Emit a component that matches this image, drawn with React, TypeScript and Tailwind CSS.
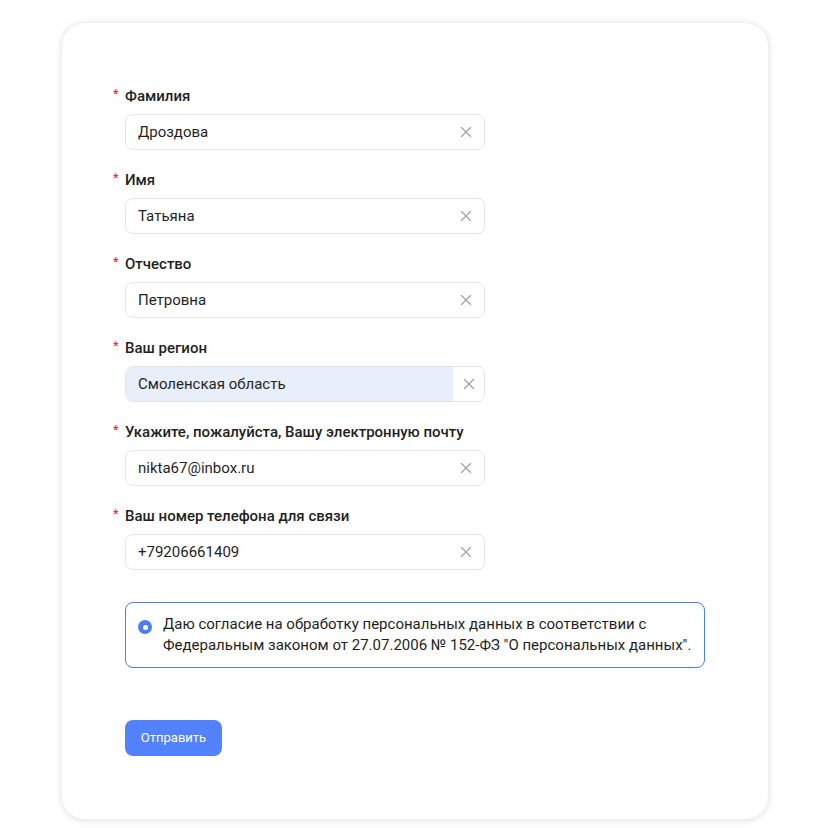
import React from "react";

const fields = [
  { label: "Фамилия", value: "Дроздова" },
  { label: "Имя", value: "Татьяна" },
  { label: "Отчество", value: "Петровна" },
  { label: "Ваш регион", value: "Смоленская область", select: true },
  { label: "Укажите, пожалуйста, Вашу электронную почту", value: "nikta67@inbox.ru" },
  { label: "Ваш номер телефона для связи", value: "+79206661409" },
];

const ClearIcon = () => (
  <svg width="12" height="12" viewBox="0 0 12 12" className="text-[#a3a3a3]">
    <path d="M1.5 1.5L10.5 10.5M10.5 1.5L1.5 10.5" stroke="currentColor" strokeWidth="1.4" strokeLinecap="round" />
  </svg>
);

const Field = ({ label, value, select }: { label: string; value: string; select?: boolean }) => {
  return (
    <div className="flex flex-col">
      <div className="flex items-start h-5 leading-5 -ml-3">
        <span className="w-3 text-[#e0262b] text-[13px] leading-4">*</span>
        <span className="text-[15px] font-medium text-[#1f1f1f]">{label}</span>
      </div>
      {select ? (
        <div className="mt-2 flex w-[360px] h-9 rounded-lg border border-[#e5e5e5] overflow-hidden">
          <div className="flex-1 flex items-center bg-[#e8effb] pl-3 text-[15px] text-[#1f1f1f]">{value}</div>
          <div className="w-[31px] flex items-center justify-center bg-white">
            <ClearIcon />
          </div>
        </div>
      ) : (
        <div className="mt-2 flex items-center w-[360px] h-9 rounded-lg border border-[#e5e5e5] pl-3 pr-[12px]">
          <span className="flex-1 text-[15px] text-[#1f1f1f]">{value}</span>
          <ClearIcon />
        </div>
      )}
    </div>
  );
};

export default function App() {
  return (
    <div className="min-h-[828px] bg-white pt-[22px] pb-2" style={{ fontFamily: "Roboto, 'Noto Sans', sans-serif" }}>
      <div className="ml-[61px] w-[708px] h-[798px] rounded-[24px] bg-white shadow-[0_1px_6px_rgba(0,0,0,0.12)] border border-[#f0f0f0] pl-[63px] pt-[63px]">
        <div className="flex flex-col gap-5">
          {fields.map((f) => (
            <Field key={f.label} {...f} />
          ))}
        </div>
        <div className="mt-8 w-[580px] rounded-lg border border-[#4d7cf4] px-3 py-[11px] flex gap-[11px]">
          <div className="mt-[6px] w-[14px] h-[14px] rounded-full bg-[#4d7cf4] flex items-center justify-center shrink-0">
            <div className="w-[5px] h-[5px] rounded-full bg-white" />
          </div>
          <p className="text-[15px] leading-[21px] text-[#1f1f1f]">
            Даю согласие на обработку персональных данных в соответствии с Федеральным законом от 27.07.2006 № 152-ФЗ "О персональных данных".
          </p>
        </div>
        <button className="mt-[52px] h-9 w-[97px] rounded-lg bg-[#5282ff] text-white text-[13px] font-normal">
          Отправить
        </button>
      </div>
    </div>
  );
}
